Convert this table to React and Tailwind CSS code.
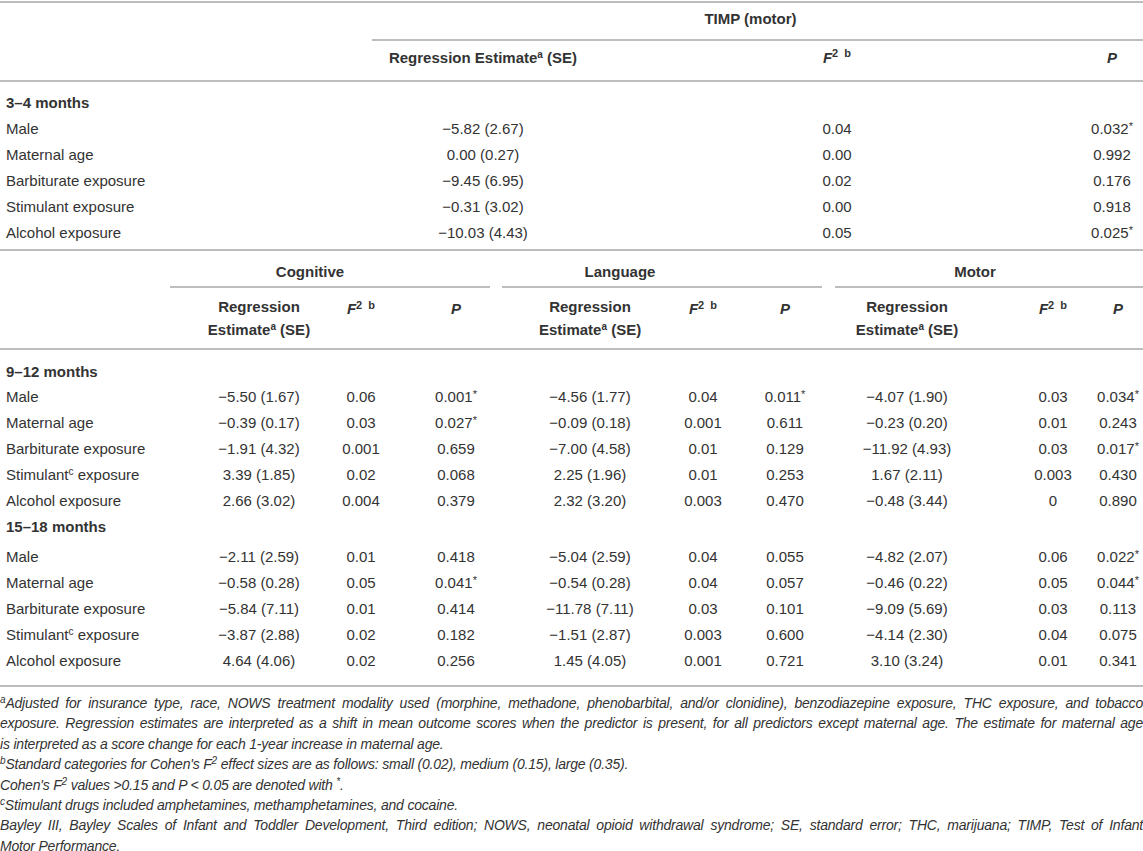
import React from 'react';

const top = [
  ['Male', '−5.82 (2.67)', '0.04', '0.032*'],
  ['Maternal age', '0.00 (0.27)', '0.00', '0.992'],
  ['Barbiturate exposure', '−9.45 (6.95)', '0.02', '0.176'],
  ['Stimulant exposure', '−0.31 (3.02)', '0.00', '0.918'],
  ['Alcohol exposure', '−10.03 (4.43)', '0.05', '0.025*'],
];

const early = [
  ['Male', '−5.50 (1.67)', '0.06', '0.001*', '−4.56 (1.77)', '0.04', '0.011*', '−4.07 (1.90)', '0.03', '0.034*'],
  ['Maternal age', '−0.39 (0.17)', '0.03', '0.027*', '−0.09 (0.18)', '0.001', '0.611', '−0.23 (0.20)', '0.01', '0.243'],
  ['Barbiturate exposure', '−1.91 (4.32)', '0.001', '0.659', '−7.00 (4.58)', '0.01', '0.129', '−11.92 (4.93)', '0.03', '0.017*'],
  ['Stimulant|c| exposure', '3.39 (1.85)', '0.02', '0.068', '2.25 (1.96)', '0.01', '0.253', '1.67 (2.11)', '0.003', '0.430'],
  ['Alcohol exposure', '2.66 (3.02)', '0.004', '0.379', '2.32 (3.20)', '0.003', '0.470', '−0.48 (3.44)', '0', '0.890'],
];

const late = [
  ['Male', '−2.11 (2.59)', '0.01', '0.418', '−5.04 (2.59)', '0.04', '0.055', '−4.82 (2.07)', '0.06', '0.022*'],
  ['Maternal age', '−0.58 (0.28)', '0.05', '0.041*', '−0.54 (0.28)', '0.04', '0.057', '−0.46 (0.22)', '0.05', '0.044*'],
  ['Barbiturate exposure', '−5.84 (7.11)', '0.01', '0.414', '−11.78 (7.11)', '0.03', '0.101', '−9.09 (5.69)', '0.03', '0.113'],
  ['Stimulant|c| exposure', '−3.87 (2.88)', '0.02', '0.182', '−1.51 (2.87)', '0.003', '0.600', '−4.14 (2.30)', '0.04', '0.075'],
  ['Alcohol exposure', '4.64 (4.06)', '0.02', '0.256', '1.45 (4.05)', '0.001', '0.721', '3.10 (3.24)', '0.01', '0.341'],
];

const Rule = ({ className = '' }) => <div className={`h-[2px] bg-[#bdbdbd] ${className}`} />;

const Val = ({ v }) =>
  v.endsWith('*') ? (
    <span>
      {v.slice(0, -1)}
      <span className="text-[11px] align-top">*</span>
    </span>
  ) : (
    <span>{v}</span>
  );

const Label = ({ text }) => {
  const parts = text.split('|');
  if (parts.length === 1) return <span>{text}</span>;
  return (
    <span>
      {parts[0]}
      <sup className="text-[10px]">{parts[1]}</sup>
      {parts[2]}
    </span>
  );
};

const F2 = () => (
  <span className="font-bold">
    <i>F</i>
    <sup className="text-[11px]">2&nbsp;&nbsp;b</sup>
  </span>
);

const P = () => <i className="font-bold">P</i>;

const RegHead = ({ twoLine }) =>
  twoLine ? (
    <div className="text-center font-bold leading-[23px]">
      Regression
      <br />
      Estimate<sup className="text-[10px]">a</sup> (SE)
    </div>
  ) : (
    <span className="font-bold">
      Regression Estimate<sup className="text-[10px]">a</sup> (SE)
    </span>
  );

const topCols = 'grid grid-cols-[372px_222px_486px_64px]';
const botCols = 'grid grid-cols-[164px_190px_14px_176px_92px_134px_30px_214px_78px_52px]';
const cell = 'flex justify-center items-center whitespace-nowrap';

const BottomRows = ({ rows }) =>
  rows.map((r) => (
    <div key={r[0]} className={`${botCols} h-[26px]`}>
      <div className="flex items-center pl-[6px] whitespace-nowrap">
        <Label text={r[0]} />
      </div>
      {r.slice(1).map((v, i) => (
        <div key={i} className={cell}>
          <Val v={v} />
        </div>
      ))}
    </div>
  ));

export default function App() {
  return (
    <div className="w-[1143px] bg-white text-[15px] text-[#333] font-['Liberation_Sans',Arial,sans-serif] pt-[1px] overflow-hidden">
      <Rule />

      {/* top block: TIMP */}
      <div className="flex h-[36px] pb-[4px]">
        <div className="w-[372px]" />
        <div className="flex-1 flex items-center justify-center pr-[14px] font-bold">TIMP (motor)</div>
      </div>
      <div className="flex">
        <div className="w-[372px]" />
        <Rule className="flex-1" />
      </div>
      <div className={`${topCols} h-[39px] pb-[5px]`}>
        <div />
        <div className={cell}>
          <RegHead />
        </div>
        <div className={cell}>
          <F2 />
        </div>
        <div className={cell}>
          <P />
        </div>
      </div>
      <Rule />
      <div className="h-[34px] pt-[8px] flex items-center pl-[6px] font-bold">3–4 months</div>
      {top.map((r) => (
        <div key={r[0]} className={`${topCols} h-[26px]`}>
          <div className="flex items-center pl-[6px]">{r[0]}</div>
          <div className={cell}>
            <Val v={r[1]} />
          </div>
          <div className={cell}>
            <Val v={r[2]} />
          </div>
          <div className={cell}>
            <Val v={r[3]} />
          </div>
        </div>
      ))}
      <Rule className="mt-[3px]" />

      {/* bottom block: Bayley */}
      <div className="flex h-[35px] pt-[7px]">
        <div className="w-[170px]" />
        <div className="w-[320px] flex items-center justify-center pr-[40px] font-bold">Cognitive</div>
        <div className="w-[12px]" />
        <div className="w-[320px] flex items-center justify-center pr-[84px] font-bold">Language</div>
        <div className="w-[13px]" />
        <div className="flex-1 flex items-center justify-center pr-[28px] font-bold">Motor</div>
      </div>
      <div className="flex">
        <div className="w-[170px]" />
        <Rule className="w-[320px]" />
        <div className="w-[12px]" />
        <Rule className="w-[320px]" />
        <div className="w-[13px]" />
        <Rule className="flex-1" />
      </div>
      <div className={`${botCols} h-[60px]`}>
        <div />
        {[0, 1, 2].map((g) => (
          <React.Fragment key={g}>
            <div className={cell}>
              <RegHead twoLine />
            </div>
            <div className={`${cell} items-start pt-[10px]`}>
              <F2 />
            </div>
            <div className={`${cell} items-start pt-[10px]`}>
              <P />
            </div>
          </React.Fragment>
        ))}
      </div>
      <Rule />
      <div className="h-[34px] pt-[10px] flex items-center pl-[6px] font-bold">9–12 months</div>
      <BottomRows rows={early} />
      <div className="h-[30px] pb-[4px] flex items-center pl-[6px] font-bold">15–18 months</div>
      <BottomRows rows={late} />
      <Rule className="mt-[11px]" />

      {/* footnotes */}
      <div className="mt-[6px] italic text-[14px] tracking-[-0.2px] leading-[20.4px] text-[#333]">
        <div className="text-justify [text-align-last:justify] whitespace-nowrap">
          <sup className="text-[10px]">a</sup>Adjusted for insurance type, race, NOWS treatment modality used (morphine, methadone, phenobarbital, and/or clonidine), benzodiazepine exposure, THC exposure, and tobacco
        </div>
        <div className="text-justify [text-align-last:justify] whitespace-nowrap">
          exposure. Regression estimates are interpreted as a shift in mean outcome scores when the predictor is present, for all predictors except maternal age. The estimate for maternal age
        </div>
        <div>is interpreted as a score change for each 1-year increase in maternal age.</div>
        <div>
          <sup className="text-[10px]">b</sup>Standard categories for Cohen's F<sup className="text-[10px]">2</sup> effect sizes are as follows: small (0.02), medium (0.15), large (0.35).
        </div>
        <div>
          Cohen's F<sup className="text-[10px]">2</sup> values &gt;0.15 and P &lt; 0.05 are denoted with <sup className="text-[10px]">*</sup>.
        </div>
        <div>
          <sup className="text-[10px]">c</sup>Stimulant drugs included amphetamines, methamphetamines, and cocaine.
        </div>
        <div className="text-justify [text-align-last:justify] whitespace-nowrap">
          Bayley III, Bayley Scales of Infant and Toddler Development, Third edition; NOWS, neonatal opioid withdrawal syndrome; SE, standard error; THC, marijuana; TIMP, Test of Infant
        </div>
        <div>Motor Performance.</div>
      </div>
    </div>
  );
}
